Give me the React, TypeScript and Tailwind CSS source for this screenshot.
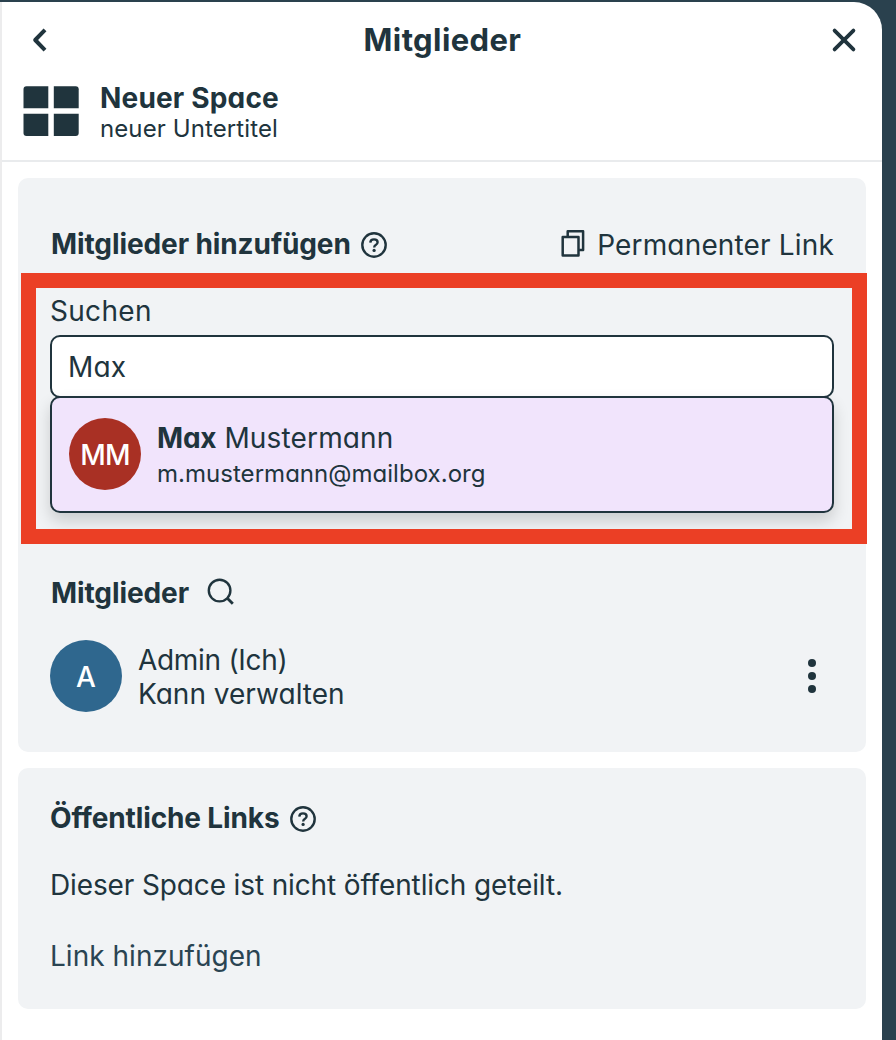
import type { ReactNode } from 'react';

function HelpIcon() {
  return (
    <svg width="26" height="26" viewBox="0 0 26 26" fill="none" stroke="currentColor" strokeWidth="2.4" className="shrink-0">
      <circle cx="13" cy="13" r="11.7" />
      <path d="M9.3 10.6C9.4 8.7 10.9 7.4 13 7.4s3.6 1.2 3.6 2.9c0 1.3-.8 2.1-1.9 2.8-1.1.7-1.5 1.2-1.5 2.3" />
      <circle cx="13.1" cy="18.4" r="1.6" fill="currentColor" stroke="none" />
    </svg>
  );
}

function CopyIcon() {
  return (
    <svg width="24" height="27" viewBox="0 0 24 27" fill="none" stroke="currentColor" strokeWidth="2.5" strokeLinejoin="round" className="shrink-0">
      <path d="M1.7 7.1h15.8v18.3H1.7z" />
      <path d="M6.7 6.5V1.3h15.4v18.6h-4" />
    </svg>
  );
}

function SearchIcon() {
  return (
    <svg width="28" height="28" viewBox="0 0 28 28" fill="none" stroke="currentColor" strokeWidth="2.4" className="shrink-0">
      <circle cx="12.6" cy="12.6" r="10.8" />
      <path d="M19.8 19.8l6 6" strokeWidth="2.8" />
    </svg>
  );
}

function Avatar({ className, children }: { className: string; children: ReactNode }) {
  return (
    <div className={`flex size-[72px] shrink-0 items-center justify-center rounded-full pt-px leading-[34px] font-medium text-white ${className}`}>
      {children}
    </div>
  );
}

export default function App() {
  return (
    <div className="h-[1040px] w-[896px] overflow-hidden bg-[#2a414e] pt-[2px] font-['Inter','Open_Sans',sans-serif] text-[28px] leading-[34px] text-[#20343d] [font-feature-settings:'cv11']">
      <div className="h-[1038px] w-[882px] rounded-tr-[28px] border-l-2 border-[#ececed] bg-white">
        <header className="h-[160px] border-b-2 border-[#e9ebed]">
          <div className="flex h-[75px] items-center justify-between pr-[25px] pl-[28px]">
            <svg width="18" height="37" viewBox="0 0 18 37" fill="none" stroke="currentColor" strokeWidth="4" strokeLinejoin="round">
              <path d="M15 8.8L5.2 19 15 29.2" />
            </svg>
            <h1 className="ml-[6px] text-[31px] leading-[37px] font-bold tracking-[0.4px]">Mitglieder</h1>
            <svg width="26" height="37" viewBox="0 0 26 37" fill="none" stroke="currentColor" strokeWidth="3.8" strokeLinecap="round">
              <path d="M3.6 9.6l18.8 18.8M22.4 9.6L3.6 28.4" />
            </svg>
          </div>
          <div className="flex pt-[3px] pl-[21px]">
            <svg width="57" height="51" viewBox="0 0 57 51" fill="currentColor" className="mt-[6px]">
              <path d="M3.5.2h21.8v22H.5V3.2q0-3 3-3z" />
              <path d="M30.8.2h21.9q3 0 3 3v19H30.8z" />
              <path d="M.5 27.7h24.8v22.2H3.5q-3 0-3-3z" />
              <path d="M30.8 27.7h24.9v19.2q0 3-3 3H30.8z" />
            </svg>
            <div className="ml-[20px] pt-px">
              <div className="font-bold tracking-[0.18px]">Neuer Space</div>
              <div className="-mt-px text-[24px] leading-[29px] tracking-[0.1px]">neuer Untertitel</div>
            </div>
          </div>
        </header>

        <main className="flex flex-col gap-4 pt-4 pr-4 pl-4">
          <section className="relative h-[574px] rounded-[10px] bg-[#f1f3f5] px-8 pt-[49px]">
            <div className="flex justify-between">
              <div className="flex items-start gap-[10px]">
                <h2 className="ml-px font-bold tracking-[-0.1px]">Mitglieder hinzufügen</h2>
                <div className="mt-[5px]"><HelpIcon /></div>
              </div>
              <div className="mt-px flex items-start gap-[12px]">
                <div className="mt-[2px]"><CopyIcon /></div>
                <span className="tracking-[0.16px]">Permanenter Link</span>
              </div>
            </div>
            <div className="mt-[32px] tracking-[0.3px]">Suchen</div>
            <div className="mt-[7px] h-[63px] rounded-[10px] border-2 border-[#20343d] bg-white pt-[13px] pl-[16px] tracking-[0.2px]">Max</div>
            <div className="relative mt-[-2px] flex h-[117px] rounded-[10px] border-2 border-[#20343d] bg-[#f1e4fc] pt-[20px] pl-[17px] shadow-[0_8px_16px_rgba(0,0,0,0.16)]">
              <Avatar className="bg-[#a93024] tracking-[-0.8px]">MM</Avatar>
              <div className="mt-[3px] ml-[16px]">
                <div className="tracking-[0.15px]"><b className="tracking-[-0.2px]">Max</b> Mustermann</div>
                <div className="mt-[4px] text-[24px] leading-[29px] tracking-[0.03px]">m.mustermann@mailbox.org</div>
              </div>
            </div>

            <div className="mt-[63px] flex gap-[18px]">
              <h2 className="ml-px font-bold tracking-[-0.1px]">Mitglieder</h2>
              <div className="mt-[2px]"><SearchIcon /></div>
            </div>
            <div className="mt-[30px] flex">
              <Avatar className="bg-[#2f678e]">A</Avatar>
              <div className="mt-[3px] ml-[16px]">
                <div className="tracking-[-0.3px]">Admin (Ich)</div>
                <div>Kann verwalten</div>
              </div>
              <svg width="10" height="36" viewBox="0 0 10 36" fill="currentColor" className="mt-[18px] mr-[17px] ml-auto">
                <circle cx="5" cy="5" r="4" />
                <circle cx="5" cy="18" r="4" />
                <circle cx="5" cy="31" r="4" />
              </svg>
            </div>
            <div className="pointer-events-none absolute top-[95px] left-[3px] h-[271px] w-[846px] border-[15px] border-[#eb3f25]" />
          </section>

          <section className="h-[241px] rounded-[10px] bg-[#f1f3f5] px-8 pt-[33px]">
            <div className="flex gap-[10px]">
              <h2 className="font-bold tracking-[-0.13px]">Öffentliche Links</h2>
              <div className="mt-[5px]"><HelpIcon /></div>
            </div>
            <p className="mt-[33px] tracking-[-0.13px]">Dieser Space ist nicht öffentlich geteilt.</p>
            <p className="mt-[37px] tracking-[0.02px] text-[#2a4452]">Link hinzufügen</p>
          </section>
        </main>
      </div>
    </div>
  );
}
